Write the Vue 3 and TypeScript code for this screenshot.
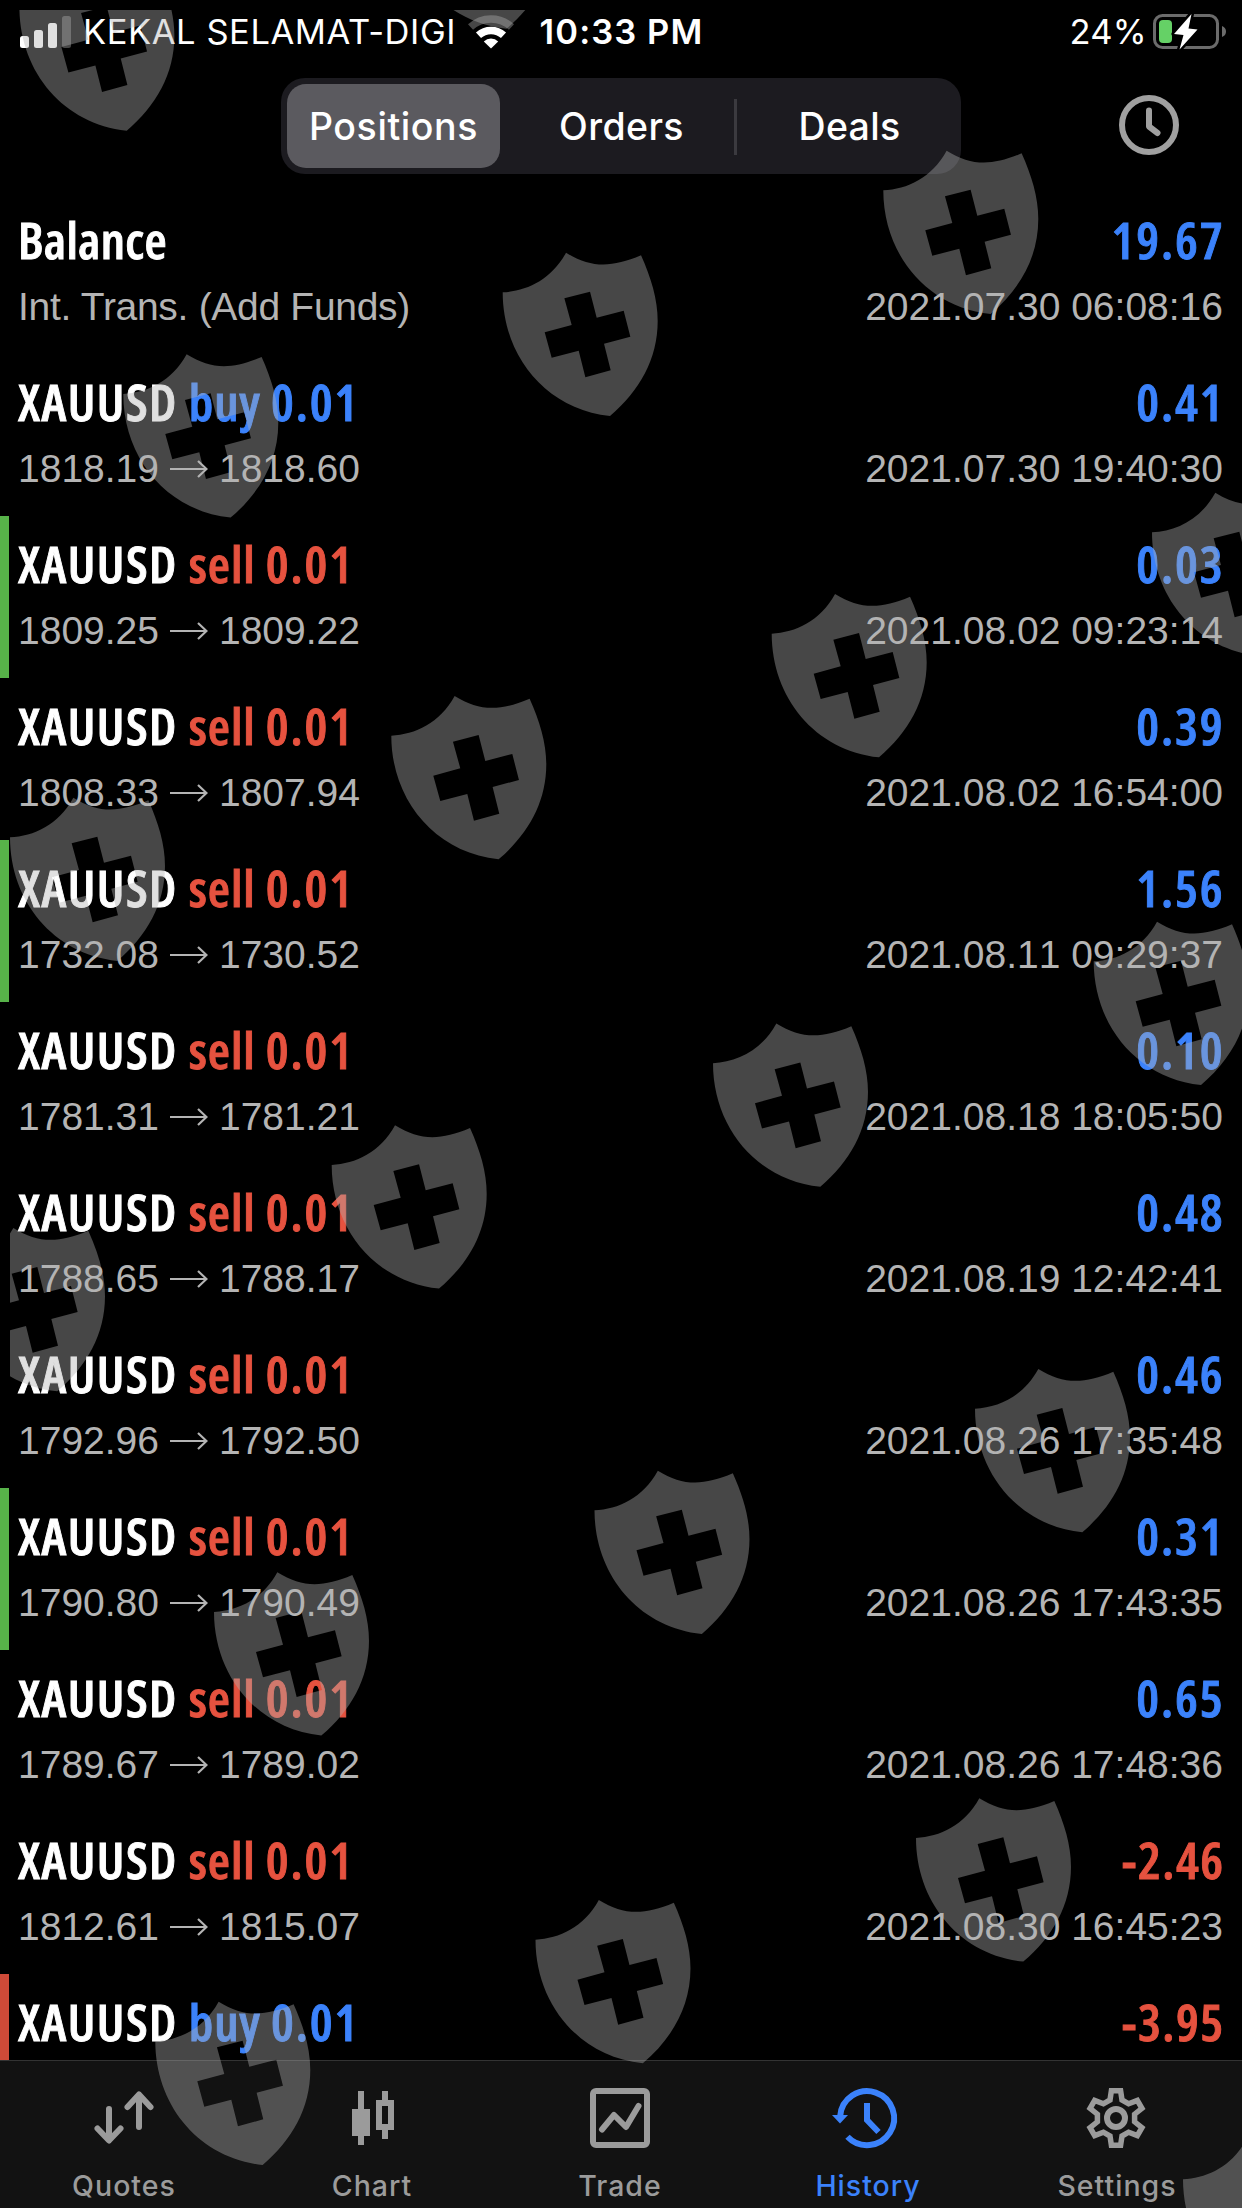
<script setup lang="ts">
import { ref } from 'vue';

interface Row {
  symbol: string;
  side?: 'buy' | 'sell';
  volume?: string;
  note?: string;
  open?: string;
  close?: string;
  profit: string;
  time: string;
  mark?: 'tp' | 'sl';
}

const segments = ['Positions', 'Orders', 'Deals'];
const activeSegment = ref('Positions');

const rows: Row[] = [
  { symbol: 'Balance', note: 'Int. Trans. (Add Funds)', profit: '19.67', time: '2021.07.30 06:08:16' },
  { symbol: 'XAUUSD', side: 'buy', volume: '0.01', open: '1818.19', close: '1818.60', profit: '0.41', time: '2021.07.30 19:40:30' },
  { symbol: 'XAUUSD', side: 'sell', volume: '0.01', open: '1809.25', close: '1809.22', profit: '0.03', time: '2021.08.02 09:23:14', mark: 'tp' },
  { symbol: 'XAUUSD', side: 'sell', volume: '0.01', open: '1808.33', close: '1807.94', profit: '0.39', time: '2021.08.02 16:54:00' },
  { symbol: 'XAUUSD', side: 'sell', volume: '0.01', open: '1732.08', close: '1730.52', profit: '1.56', time: '2021.08.11 09:29:37', mark: 'tp' },
  { symbol: 'XAUUSD', side: 'sell', volume: '0.01', open: '1781.31', close: '1781.21', profit: '0.10', time: '2021.08.18 18:05:50' },
  { symbol: 'XAUUSD', side: 'sell', volume: '0.01', open: '1788.65', close: '1788.17', profit: '0.48', time: '2021.08.19 12:42:41' },
  { symbol: 'XAUUSD', side: 'sell', volume: '0.01', open: '1792.96', close: '1792.50', profit: '0.46', time: '2021.08.26 17:35:48' },
  { symbol: 'XAUUSD', side: 'sell', volume: '0.01', open: '1790.80', close: '1790.49', profit: '0.31', time: '2021.08.26 17:43:35', mark: 'tp' },
  { symbol: 'XAUUSD', side: 'sell', volume: '0.01', open: '1789.67', close: '1789.02', profit: '0.65', time: '2021.08.26 17:48:36' },
  { symbol: 'XAUUSD', side: 'sell', volume: '0.01', open: '1812.61', close: '1815.07', profit: '-2.46', time: '2021.08.30 16:45:23' },
  { symbol: 'XAUUSD', side: 'buy', volume: '0.01', profit: '-3.95', time: '', mark: 'sl' }
];

const tabs = ['Quotes', 'Chart', 'Trade', 'History', 'Settings'];
const activeTab = ref('History');

// top-left corner of every shield on the overlay
const shields = [
  [19.4, -32.6], [399.2, -134.6],
  [883.3, 150.7], [502.7, 252.7], [123.3, 354.3],
  [1152, 492.7], [771.7, 594], [391.3, 696], [10, 797.7],
  [1093.7, 921.7], [713, 1023.5], [331.7, 1125.3], [-50, 1228],
  [975, 1369], [594.5, 1470.7], [214, 1572.3],
  [916, 1798.3], [535.5, 1900], [155.3, 2001.7],
  [1183, 2139.7]
];

// six-toothed gear outline around (29, 30)
const gearPoints = Array.from({ length: 6 }, (_, i) => {
  const a = (i * Math.PI) / 3;
  return [[-6, -18], [-4.6, -27.3], [4.6, -27.3], [6, -18]].map(([x, y]) => {
    const px = 29 + x * Math.cos(a) - y * Math.sin(a);
    const py = 30 + x * Math.sin(a) + y * Math.cos(a);
    return `${px.toFixed(2)},${py.toFixed(2)}`;
  }).join(' ');
}).join(' ');
</script>

<template>
  <div class="screen">
    <div class="status-bar">
      <div class="status-left">
        <svg class="signal" width="51" height="34" viewBox="0 0 51 34" fill="#fff">
          <rect x="0" y="21" width="9" height="12" rx="2.5" />
          <rect x="14" y="15" width="9" height="18" rx="2.5" />
          <rect x="28" y="8" width="9" height="25" rx="2.5" />
          <rect x="42" y="1" width="9" height="32" rx="2.5" opacity="0.28" />
        </svg>
        <span class="carrier">KEKAL SELAMAT-DIGI</span>
        <svg class="wifi" width="46" height="34" viewBox="0 0 46 34">
          <path d="M2.5 12 A30 30 0 0 1 43.5 12" fill="none" stroke="#fff" stroke-width="7.5" opacity="0.28" />
          <path d="M10.5 20.3 A18.5 18.5 0 0 1 35.5 20.3" fill="none" stroke="#fff" stroke-width="7.5" />
          <path d="M23 33.5 L15.8 26.5 A10 10 0 0 1 30.2 26.5 Z" fill="#fff" />
        </svg>
      </div>
      <div class="clock">10:33 PM</div>
      <div class="status-right">
        <span class="percent">24%</span>
        <svg class="battery" width="74" height="36" viewBox="0 0 74 36">
          <rect x="1.5" y="1.5" width="63" height="32" rx="8" fill="none" stroke="#6b6b6b" stroke-width="3" />
          <path d="M69 12 Q73 13.5 73 17.5 Q73 21.5 69 23 Z" fill="#6b6b6b" />
          <rect x="6" y="6" width="13" height="23" rx="4" fill="#65d166" />
          <path d="M38.5 0 L21 20 L30.5 21 L26.5 35.5 L44.5 15.5 L35.5 14.5 Z" fill="#fff" stroke="#000" stroke-width="5" stroke-linejoin="round" paint-order="stroke" />
        </svg>
      </div>
    </div>

    <div class="header">
      <div class="segmented">
        <div
          v-for="s in segments"
          :key="s"
          class="segment"
          :class="{ active: s === activeSegment }"
          @click="activeSegment = s"
        >{{ s }}</div>
      </div>
      <svg class="period" width="60" height="60" viewBox="0 0 60 60" fill="none" stroke="#a0a0a0" stroke-width="6">
        <circle cx="30" cy="30" r="27" />
        <path d="M30 15.5 V31.5 L38.5 38" stroke-linecap="round" stroke-linejoin="round" />
      </svg>
    </div>

    <div class="list">
      <div v-for="(r, i) in rows" :key="i" class="row" :class="r.mark">
        <div class="line title">
          <div class="name">
            <span class="symbol" :class="{ balance: !r.side }">{{ r.symbol }}</span>
            <span v-if="r.side" class="side" :class="r.side">{{ r.side }} <span class="volume">{{ r.volume }}</span></span>
          </div>
          <span class="profit" :class="{ loss: r.profit.startsWith('-') }">{{ r.profit }}</span>
        </div>
        <div class="line detail">
          <span v-if="r.note" class="note">{{ r.note }}</span>
          <div v-else-if="r.open" class="prices">
            <span>{{ r.open }}</span>
            <svg width="38" height="20" viewBox="0 0 38 20" fill="none" stroke="#b4b4b4" stroke-width="2.2">
              <path d="M0 10 H36 M28 2 L36.5 10 L28 18" />
            </svg>
            <span>{{ r.close }}</span>
          </div>
          <span>{{ r.time }}</span>
        </div>
      </div>
    </div>

    <div class="tab-bar">
      <div v-for="t in tabs" :key="t" class="tab" :class="{ active: t === activeTab }" @click="activeTab = t">
        <svg class="tab-icon" width="60" height="60" viewBox="0 0 60 60" fill="none" stroke="currentColor" stroke-width="6">
          <g v-if="t === 'Quotes'" stroke-linecap="round" stroke-linejoin="round">
            <path d="M15 21 V52 M3.5 40.5 L15 52.5 L26.5 40.5" />
            <path d="M45 39 V8 M33.5 19 L45 6.5 L56.5 19" />
          </g>
          <g v-else-if="t === 'Chart'" fill="currentColor" stroke="none">
            <path d="M16 3 H22 V21 H28 V48 H22 V57 H16 V48 H10 V21 H16 Z" />
            <path fill-rule="evenodd" d="M40 3 H46 V12 H52 V42 H46 V51 H40 V42 H34 V12 H40 Z M40 18 V36 H46 V18 Z" />
          </g>
          <g v-else-if="t === 'Trade'">
            <rect x="3" y="3" width="54" height="54" rx="3" />
            <path d="M12 41.5 L24 27 L36 39 L48.5 18" stroke-linecap="round" stroke-linejoin="round" />
          </g>
          <g v-else-if="t === 'History'">
            <path d="M2.2 28 A27 27 0 1 1 9.5 48.7" />
            <path d="M-6 27 H10 L2 35.5 Z" fill="currentColor" stroke="none" />
            <path d="M29 15 V32 L40.5 44" />
          </g>
          <g v-else>
            <polygon :points="gearPoints" stroke-width="5.5" />
            <circle cx="29" cy="30" r="9" />
          </g>
        </svg>
        <span class="tab-label">{{ t }}</span>
      </div>
    </div>

    <svg class="overlay" width="1242" height="2208" viewBox="0 0 1242 2208">
      <defs>
        <clipPath id="area"><rect x="10" y="10" width="1232" height="2198" /></clipPath>
        <path
          id="shield"
          fill-rule="evenodd"
          d="M0 119 C72 115 145 82 190 0 C265 46 325 46 415 8 C445 75 465 140 465 205 C465 320 410 415 322 490 C130 470 0 310 0 119 Z
             M185 137 L207 217 L126 239 L147 315 L228 294 L248 374 L324 353 L304 273 L383 252 L363 174 L282 195 L262 117 Z"
        />
      </defs>
      <g clip-path="url(#area)" fill="#b2b2b2" fill-opacity="0.4">
        <use v-for="([x, y], i) in shields" :key="i" href="#shield" :transform="`translate(${x} ${y}) scale(0.3333)`" />
      </g>
    </svg>
  </div>
</template>

<style>
body {
  margin: 0;
  background: #000;
}
</style>

<style scoped>
.screen {
  position: relative;
  display: flex;
  flex-direction: column;
  width: 1242px;
  height: 2208px;
  overflow: hidden;
  background: #000;
  color: #fff;
  font-family: Inter, 'Liberation Sans', sans-serif;
}

.status-bar {
  display: grid;
  grid-template-columns: 1fr auto 1fr;
  align-items: center;
  height: 64px;
  padding: 0 15px 0 20px;
  box-sizing: border-box;
  font-size: 34.5px;
  line-height: 64px;
}

.status-left,
.status-right {
  display: flex;
  align-items: center;
}

.status-right {
  justify-content: flex-end;
}

.signal {
  margin-right: 12px;
}

.carrier {
  white-space: nowrap;
  letter-spacing: 0.55px;
}

.wifi {
  margin-left: 12px;
}

.clock {
  margin-right: 4px;
  font-weight: 600;
  letter-spacing: 1.1px;
}

.percent {
  margin-right: 6px;
  letter-spacing: 0.3px;
}

.header {
  display: grid;
  grid-template-columns: 1fr 680px 1fr;
  align-items: center;
  height: 128px;
  padding-bottom: 4px;
  box-sizing: border-box;
}

.segmented {
  grid-column: 2;
  display: grid;
  grid-template-columns: 224px 223px 1fr;
  height: 96px;
  padding: 6px;
  box-sizing: border-box;
  border-radius: 24px;
  background: #1c1b20;
}

.segment {
  font-size: 37.5px;
  font-weight: 450;
  line-height: 86px;
  text-align: center;
}

.segment.active {
  height: 84px;
  margin-right: 11px;
  border-radius: 19px;
  background: #5b5a5f;
  font-weight: 550;
  letter-spacing: 0.6px;
}

.segment:nth-child(2) {
  padding-right: 2px;
  letter-spacing: 0.4px;
}

.segment:last-child {
  padding-left: 7px;
  border-left: 3px solid;
  border-image: linear-gradient(transparent 18%, #3b3a3f 18%, #3b3a3f 82%, transparent 82%) 1;
  letter-spacing: 0.3px;
}

.period {
  justify-self: center;
  margin: -2px 0 0 94px;
}

.list {
  flex: 1;
  min-height: 0;
  overflow: hidden;
}

.row {
  height: 162px;
  padding: 15px 19px 0 9px;
  box-sizing: border-box;
  border-left: 9px solid transparent;
}

.row.tp {
  border-color: #57b249;
}

.row.sl {
  border-color: #ce4a38;
}

.line {
  display: flex;
  justify-content: space-between;
}

.title {
  height: 70px;
  font-family: 'Open Sans', 'Noto Sans', sans-serif;
  font-size: 51px;
  font-weight: 600;
  font-stretch: 75%;
  line-height: 64px;
  -webkit-text-stroke: 0.9px currentColor;
}

.name {
  display: flex;
  gap: 11px;
}

.symbol {
  letter-spacing: 1.5px;
}

.symbol.balance {
  letter-spacing: 0.3px;
}

.side {
  letter-spacing: 0.9px;
}

.volume,
.profit {
  letter-spacing: 1.9px;
}

.profit {
  margin-right: -1.5px;
}

.profit.loss {
  letter-spacing: 1.5px;
}

.buy,
.profit {
  color: #3b82fb;
}

.sell,
.profit.loss {
  color: #e6523f;
}

.detail {
  height: 52px;
  color: #b4b4b4;
  font-family: 'Liberation Sans', Arial, sans-serif;
  font-size: 39px;
  font-kerning: none;
  line-height: 60px;
}

.note {
  font-kerning: normal;
  letter-spacing: -0.3px;
}

.prices {
  display: flex;
  align-items: center;
  height: 60px;
  gap: 11px;
}

.tab-bar {
  display: grid;
  grid-template-columns: 248px 248px 248px 248px 1fr;
  height: 148px;
  box-sizing: border-box;
  border-top: 1px solid #333;
  background: #121212;
}

.tab {
  display: flex;
  flex-direction: column;
  align-items: center;
  padding-top: 27px;
  color: #9b9b9b;
}

.tab.active {
  color: #3b82fb;
}

.tab-icon {
  overflow: visible;
}

.tab-label {
  margin-top: 20px;
  font-size: 28.5px;
  font-weight: 450;
  line-height: 36px;
  letter-spacing: 1px;
}

.overlay {
  position: absolute;
  top: 0;
  left: 0;
  pointer-events: none;
}
</style>
